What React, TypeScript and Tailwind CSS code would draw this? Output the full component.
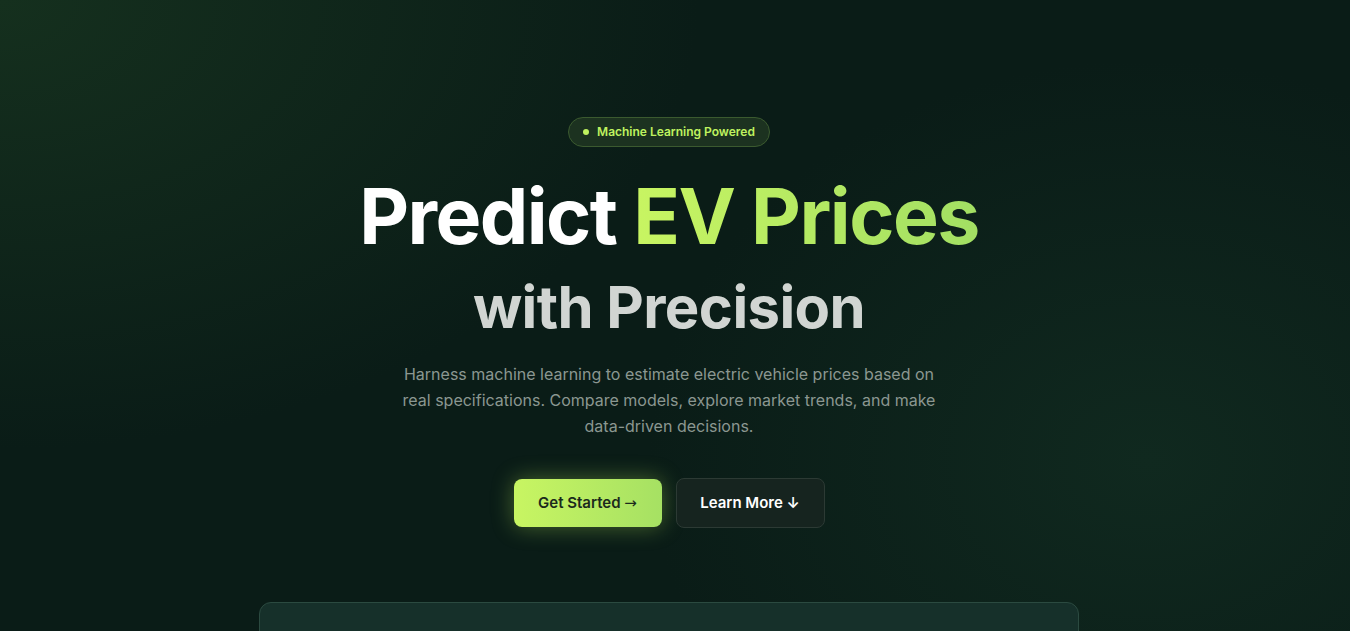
import { useState } from 'react';

const font = { fontFamily: 'Inter, "Noto Sans", sans-serif' };

function Badge() {
  return (
    <div className="inline-flex h-[30px] items-center gap-2 rounded-full border border-[#3b5a2f] bg-[#1c3220] px-[14px]">
      <span className="h-1.5 w-1.5 rounded-full bg-[#bff25f]" />
      <span className="text-[12px] font-semibold text-[#bff25f]">Machine Learning Powered</span>
    </div>
  );
}

export default function App() {
  const [hover, setHover] = useState(false);

  return (
    <div
      style={font}
      className="h-screen overflow-y-auto bg-[#0a1c17] [&::-webkit-scrollbar]:w-1 [&::-webkit-scrollbar-track]:bg-[#f4f4f1] [&::-webkit-scrollbar-thumb]:bg-[#dcdcd3]"
    >
      <div className="min-h-[900px] bg-[radial-gradient(ellipse_700px_450px_at_0%_0%,#15301e,transparent),radial-gradient(ellipse_500px_400px_at_85%_45%,#10291f,transparent)]">
        {/* Hero */}
        <section className="mr-[12px] flex flex-col items-center px-6 pt-[117px] text-center">
          <Badge />

          <h1 className="mt-[25px] font-bold">
            <span className="block text-[77px] leading-[88px] tracking-[-0.02em] text-white">
              Predict{' '}
              <span className="bg-gradient-to-r from-[#c8f562] to-[#a2df63] bg-clip-text text-transparent">
                EV Prices
              </span>
            </span>
            <span className="mt-4 block text-[58px] leading-[62px] tracking-[-0.01em] text-[#d1d5d2]">
              with Precision
            </span>
          </h1>

          <p className="mt-[23px] max-w-[545px] text-[16px] leading-[26px] text-[#8b9791]">
            Harness machine learning to estimate electric vehicle prices based on real specifications. Compare
            models, explore market trends, and make data-driven decisions.
          </p>

          <div className="mt-[39px] flex items-center gap-[14px]">
            <button
              onMouseEnter={() => setHover(true)}
              onMouseLeave={() => setHover(false)}
              className={`h-[48px] w-[148px] rounded-lg bg-gradient-to-r from-[#c8f562] to-[#a6e163] text-[15px] font-semibold text-[#1b2a1c] shadow-[0_0_22px_rgba(190,240,90,0.35)] ${
                hover ? 'brightness-105' : ''
              }`}
            >
              Get Started <span style={{ fontFamily: '"DejaVu Sans", sans-serif' }} className="font-normal">→</span>
            </button>
            <button className="h-[50px] w-[149px] rounded-lg border border-[#2c3a34] bg-[#16241f] text-[15px] font-semibold text-white">
              Learn More ↓
            </button>
          </div>
        </section>

        {/* Predictor card */}
        <div className="mr-[12px] mt-[74px] flex justify-center px-6">
          <div className="h-[420px] w-[820px] rounded-xl border border-[#2b4a40] bg-[#16302a]" />
        </div>
      </div>
    </div>
  );
}
